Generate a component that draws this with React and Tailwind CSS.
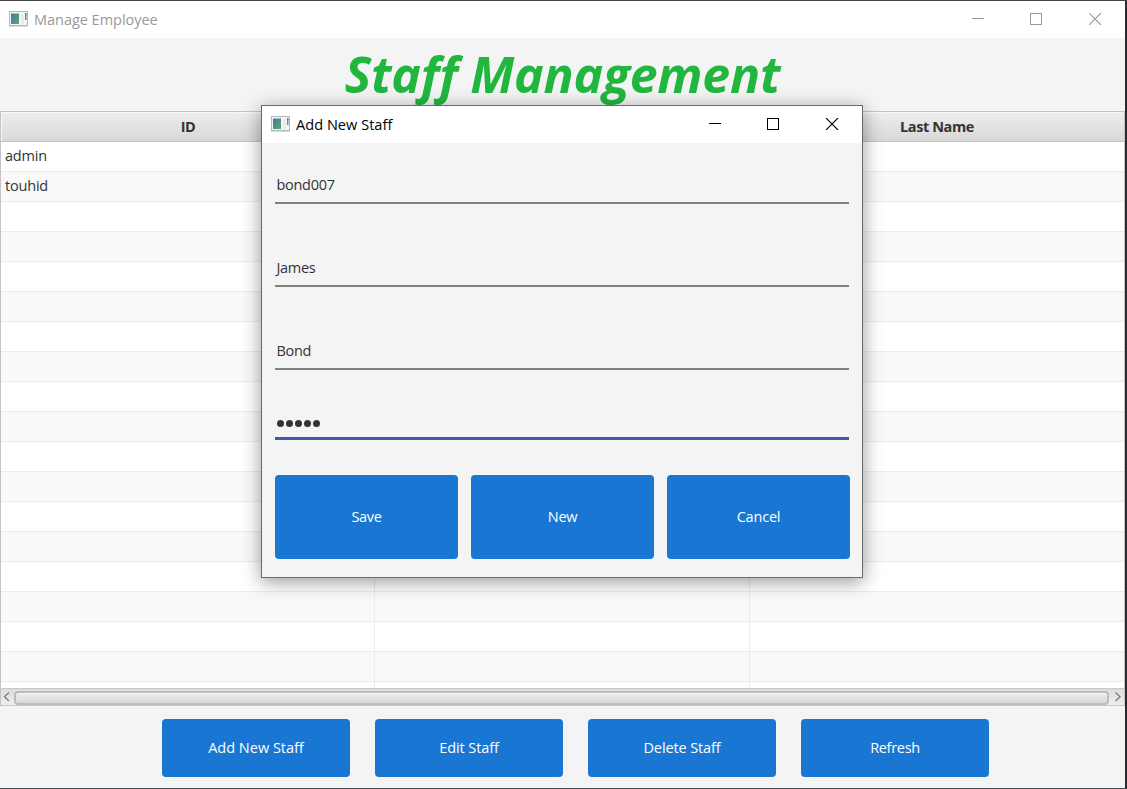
import React from "react";

const rows = [
  { id: "admin" },
  { id: "touhid" },
  ...Array.from({ length: 17 }, () => ({ id: "" })),
];

function AppIcon() {
  return (
    <svg width="19" height="16" viewBox="0 0 19 16" className="-mt-px shrink-0">
      <defs>
        <linearGradient id="screen" x1="0" y1="0" x2="1" y2="1">
          <stop offset="0" stopColor="#4a78a8" />
          <stop offset="1" stopColor="#55ab6c" />
        </linearGradient>
      </defs>
      <rect x="0.5" y="0.5" width="18" height="14" fill="#f3f5f6" stroke="#b3b8bc" />
      <path d="M0 15.500h19" stroke="#d9dcde" />
      <rect x="2" y="2.500" width="8" height="10.500" fill="url(#screen)" />
      <rect x="12" y="3" width="3" height="10" fill="#e9ebec" />
      <rect x="16" y="3" width="1.500" height="6" fill="#55a07c" />
      <rect x="16" y="2" width="1.500" height="2" fill="#5a7fae" />
    </svg>
  );
}

function WindowControls() {
  return (
    <div className="-mt-px ml-auto flex items-center gap-[46px]">
      <svg width="12" height="12" viewBox="0 0 12 12" shapeRendering="crispEdges">
        <path d="M0 5.500h12" stroke="currentColor" />
      </svg>
      <svg width="12" height="12" viewBox="0 0 12 12" shapeRendering="crispEdges">
        <rect x="0.5" y="0.5" width="11" height="11" fill="none" stroke="currentColor" />
      </svg>
      <svg width="13" height="12" viewBox="0 0 13 12" className="ml-px">
        <path d="M0 0l12 12M12 0l-12 12" stroke="currentColor" strokeWidth="1.1" />
      </svg>
    </div>
  );
}

function ActionButton({ label, className }) {
  return (
    <button className={`rounded-[4px] bg-[#1976d3] pb-px text-white ${className}`}>
      {label}
    </button>
  );
}

function HeaderCell({ children }) {
  return (
    <div className="flex h-[30px] items-center justify-center border-b border-[#c4c4c4] bg-linear-to-b from-[#eeeeee] to-[#d8d8d8] font-bold tracking-[-0.4px] text-[#333] shadow-[inset_1px_1px_0_#f8f8f8]">
      {children}
    </div>
  );
}

function ScrollBar() {
  return (
    <div className="flex h-[18px] shrink-0 items-center border-y border-[#c8c8c8] bg-linear-to-b from-[#dcdcdc] to-[#efefef]">
      <svg width="13" height="12" viewBox="0 0 13 12" className="shrink-0">
        <path d="M8 1.500L3.500 5.700L8 9.900" fill="none" stroke="#808080" strokeWidth="1.4" />
      </svg>
      <div className="mt-px h-[14px] grow rounded-[4px] border-2 border-[#bcbcbc] bg-linear-to-b from-[#eeeeee] to-[#d9d9d9] shadow-[inset_0_1px_0_#f8f8f8]" />
      <svg width="15" height="12" viewBox="0 0 15 12" className="shrink-0">
        <path d="M6.500 1.500L11 5.700L6.500 9.900" fill="none" stroke="#808080" strokeWidth="1.4" />
      </svg>
    </div>
  );
}

function Field({ value, className = "" }) {
  return (
    <div className={`flex h-[40px] items-center border-b-2 border-[#808080] pl-[1.500px] pt-[4px] tracking-[-0.3px] text-[#333] ${className}`}>
      {value}
    </div>
  );
}

function AddStaffDialog() {
  return (
    <div className="absolute left-[261px] top-[104px] flex h-[473px] w-[602px] flex-col border border-[#6b6b6b] bg-[#f4f4f4] shadow-[0_4px_18px_rgba(0,0,0,0.4)]">
      <div className="flex h-[37px] shrink-0 items-center gap-[6px] bg-white pl-[9px] pr-[23px] text-black">
        <AppIcon />
        <span className="tracking-[0.05px]">Add New Staff</span>
        <WindowControls />
      </div>
      <div className="flex flex-col px-[13px] pt-[21px]">
        <Field value="bond007" className="mb-[43px]" />
        <Field value="James" className="mb-[43px]" />
        <Field value="Bond" />
        <div className="mt-[30px] flex h-[40px] items-center gap-[2px] border-b-[3px] border-[#4059a9] pl-[2px] pt-[9px]">
          {[0, 1, 2, 3, 4].map((dot) => (
            <span key={dot} className="size-[7px] rounded-full bg-[#333]" />
          ))}
        </div>
        <div className="-mr-px mt-[35px] flex gap-[13px]">
          <ActionButton label="Save" className="h-[84px] w-[183px] tracking-[-0.3px]" />
          <ActionButton label="New" className="h-[84px] w-[183px] tracking-[-0.3px]" />
          <ActionButton label="Cancel" className="h-[84px] w-[183px] tracking-[-0.2px]" />
        </div>
      </div>
    </div>
  );
}

export default function App() {
  return (
    <div className="relative flex h-[789px] w-[1127px] flex-col overflow-hidden border-b border-r-2 border-t border-b-[#4a4d50] border-r-[#252b30] border-t-[#454545] bg-[#f4f4f4] font-['Open_Sans',sans-serif] text-[14.500px]">
      <div className="flex h-[37px] shrink-0 items-center gap-[6px] bg-white pl-[9px] pr-[23px] text-[#999]">
        <AppIcon />
        <span className="tracking-[-0.03px]">Manage Employee</span>
        <WindowControls />
      </div>
      <h1 className="flex h-[73px] shrink-0 items-center justify-center pb-px text-[50px] font-bold italic tracking-[-0.25px] text-[#21b73f]">
        Staff Management
      </h1>
      <div className="flex h-[595px] shrink-0 flex-col border-x border-t border-[#c4c4c4]">
        <div className="grid shrink-0 grid-cols-[374px_375px_374px]">
          <HeaderCell>ID</HeaderCell>
          <HeaderCell>First Name</HeaderCell>
          <HeaderCell>Last Name</HeaderCell>
        </div>
        <div className="flex min-h-0 grow flex-col overflow-hidden bg-white">
          {rows.map((row, i) => (
            <div
              key={i}
              className="grid h-[30px] shrink-0 grid-cols-[374px_375px_1fr] border-b border-[#ececec] odd:bg-white even:bg-[#f9f9f9]"
            >
              <div className="flex items-center border-r border-[#ececec] pb-px pl-[4px] tracking-[-0.2px] text-[#333]">
                {row.id}
              </div>
              <div className="border-r border-[#ececec]" />
              <div />
            </div>
          ))}
        </div>
        <ScrollBar />
      </div>
      <div className="flex gap-[25px] pl-[162px] pt-[13px]">
        <ActionButton label="Add New Staff" className="h-[58px] w-[188px]" />
        <ActionButton label="Edit Staff" className="h-[58px] w-[188px] tracking-[-0.1px]" />
        <ActionButton label="Delete Staff" className="h-[58px] w-[188px] tracking-[-0.12px]" />
        <ActionButton label="Refresh" className="h-[58px] w-[188px] tracking-[-0.3px]" />
      </div>
      <AddStaffDialog />
    </div>
  );
}
